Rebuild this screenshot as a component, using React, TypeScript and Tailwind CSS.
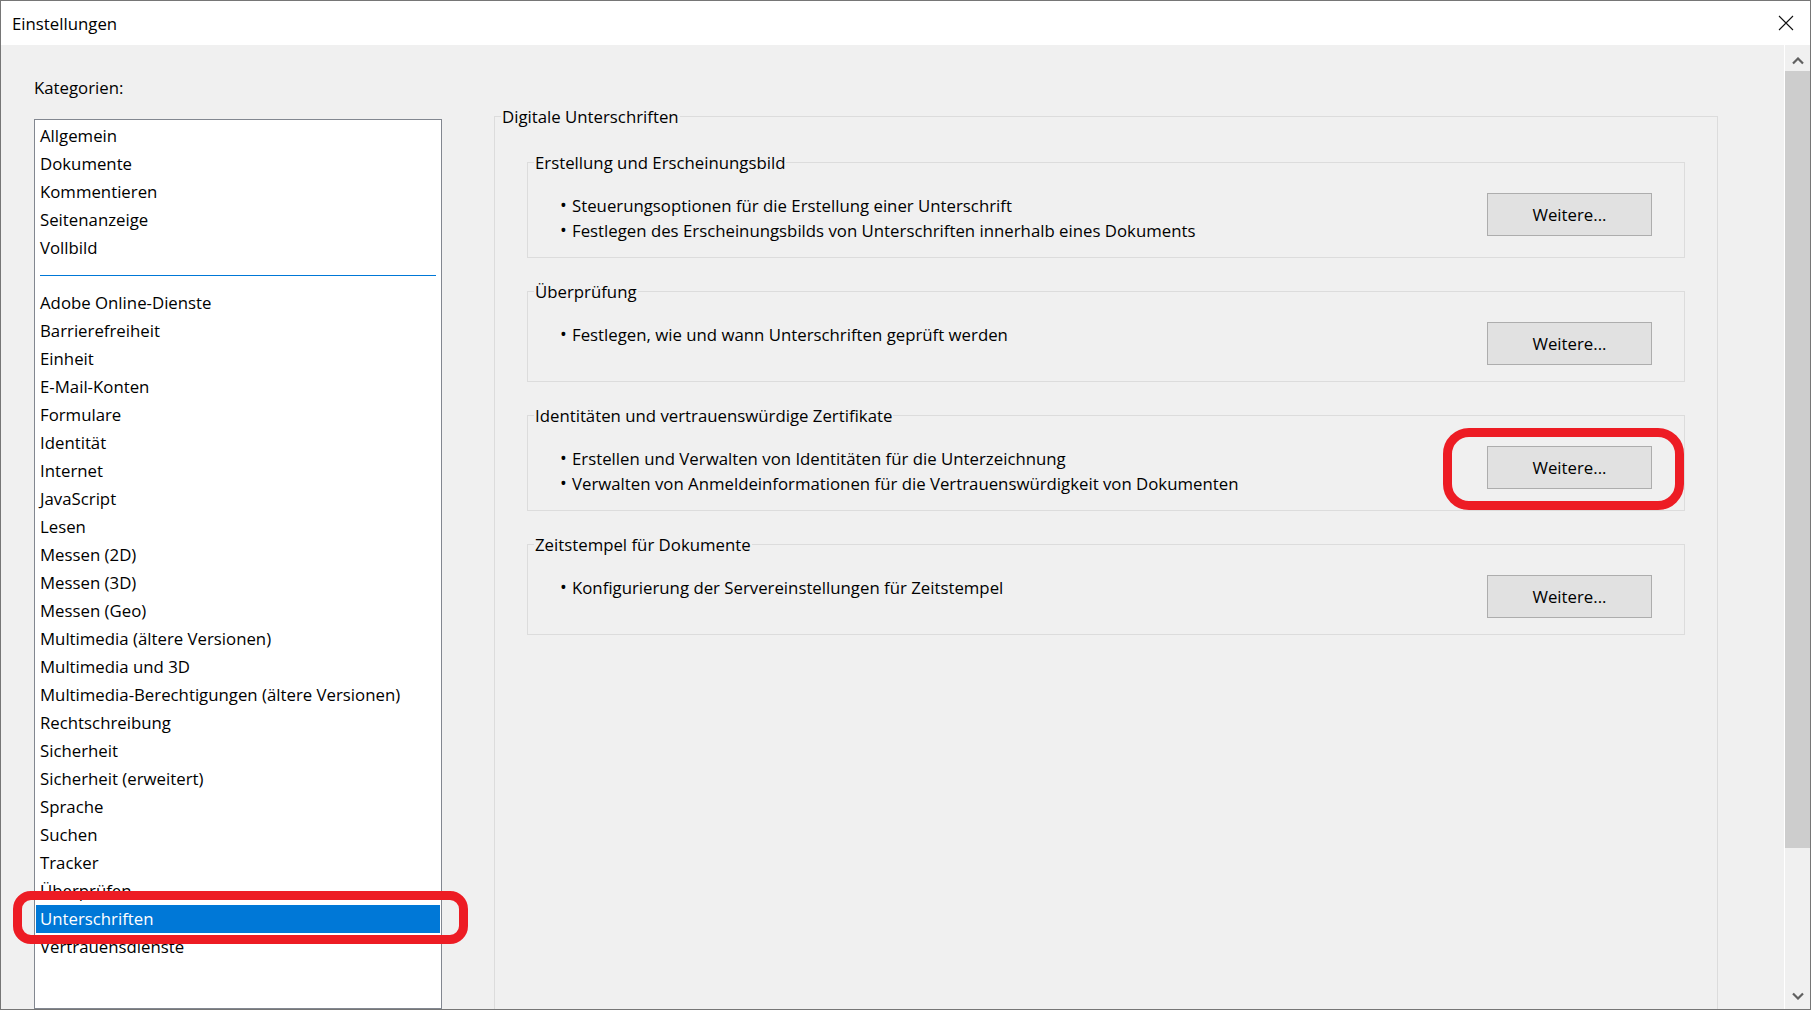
import React from 'react';

const topCategories = ['Allgemein', 'Dokumente', 'Kommentieren', 'Seitenanzeige', 'Vollbild'];

const moreCategories = [
  'Adobe Online-Dienste',
  'Barrierefreiheit',
  'Einheit',
  'E-Mail-Konten',
  'Formulare',
  'Identität',
  'Internet',
  'JavaScript',
  'Lesen',
  'Messen (2D)',
  'Messen (3D)',
  'Messen (Geo)',
  'Multimedia (ältere Versionen)',
  'Multimedia und 3D',
  'Multimedia-Berechtigungen (ältere Versionen)',
  'Rechtschreibung',
  'Sicherheit',
  'Sicherheit (erweitert)',
  'Sprache',
  'Suchen',
  'Tracker',
  'Überprüfen',
  'Unterschriften',
  'Vertrauensdienste',
];

const SELECTED = 'Unterschriften';

interface Section {
  title: string;
  bullets: string[];
  tall: boolean;
}

const sections: Section[] = [
  {
    title: 'Erstellung und Erscheinungsbild',
    bullets: [
      'Steuerungsoptionen für die Erstellung einer Unterschrift',
      'Festlegen des Erscheinungsbilds von Unterschriften innerhalb eines Dokuments',
    ],
    tall: true,
  },
  {
    title: 'Überprüfung',
    bullets: ['Festlegen, wie und wann Unterschriften geprüft werden'],
    tall: false,
  },
  {
    title: 'Identitäten und vertrauenswürdige Zertifikate',
    bullets: [
      'Erstellen und Verwalten von Identitäten für die Unterzeichnung',
      'Verwalten von Anmeldeinformationen für die Vertrauenswürdigkeit von Dokumenten',
    ],
    tall: true,
  },
  {
    title: 'Zeitstempel für Dokumente',
    bullets: ['Konfigurierung der Servereinstellungen für Zeitstempel'],
    tall: false,
  },
];

const CategoryRow: React.FC<{ label: string }> = ({ label }) => {
  const active = label === SELECTED;
  return (
    <div className={`h-[28px] pl-[4px] leading-[28px] whitespace-nowrap ${active ? 'bg-[#0078d7] text-white' : 'text-black'}`}>
      {label}
    </div>
  );
};

const GroupBox: React.FC<{ section: Section }> = ({ section }) => (
  <div className={`relative border border-[#dcdcdc] ${section.tall ? 'h-[96px]' : 'h-[91px]'}`}>
    <span className="absolute left-[6px] top-0 -translate-y-1/2 bg-[#f0f0f0] px-[1px] leading-[24px] text-black">
      {section.title}
    </span>
    <div className="flex items-start justify-between pt-[30px]">
      <ul className="pl-[32px]">
        {section.bullets.map(b => (
          <li key={b} className="flex h-[25px] items-center whitespace-nowrap text-black">
            <span className="w-[12px] text-[18px] leading-[25px]">•</span>
            <span>{b}</span>
          </li>
        ))}
      </ul>
      <button className="mr-[32px] h-[43px] w-[165px] border border-[#adadad] bg-[#e1e1e1] text-black">Weitere...</button>
    </div>
  </div>
);

const Chevron: React.FC<{ down?: boolean }> = ({ down }) => (
  <svg width="12" height="8" viewBox="0 0 12 8" className="block">
    <path d={down ? 'M1 1.5 L6 6.5 L11 1.5' : 'M1 6.5 L6 1.5 L11 6.5'} fill="none" stroke="#606060" strokeWidth="2.2" />
  </svg>
);

export default function App() {
  return (
    <div className="relative flex h-[1010px] w-[1811px] flex-col overflow-hidden border border-[#767676] bg-[#f0f0f0] font-['Open_Sans','Noto_Sans',sans-serif] text-[16.8px] text-black">
      <header className="flex h-[44px] shrink-0 items-center justify-between bg-white pl-[11px] pt-[2px]">
        <span>Einstellungen</span>
        <svg width="16" height="16" viewBox="0 0 16 16" className="mr-[16px] mb-[2px]">
          <path d="M1 1 L15 15 M15 1 L1 15" stroke="#111" strokeWidth="1.1" />
        </svg>
      </header>

      <div className="flex min-h-0 flex-1">
        <aside className="flex w-[493px] shrink-0 flex-col pl-[33px] pt-[31px]">
          <p className="leading-[24px]">Kategorien:</p>
          <div className="mt-[19px] w-[408px] flex-1 border border-[#828790] bg-white px-[1px] pt-[2px]">
            {topCategories.map(c => (
              <CategoryRow key={c} label={c} />
            ))}
            <div className="flex h-[27px] items-center px-[4px]">
              <div className="h-[1px] w-full bg-[#0078d7]" />
            </div>
            {moreCategories.map(c => (
              <CategoryRow key={c} label={c} />
            ))}
          </div>
        </aside>

        <main className="flex flex-1 pt-[71px]">
          <section className="relative w-[1224px] shrink-0 border-x border-t border-[#dcdcdc] px-[32px] pt-[45px]">
            <span className="absolute left-[6px] top-0 -translate-y-1/2 bg-[#f0f0f0] px-[1px] leading-[24px]">
              Digitale Unterschriften
            </span>
            <div className="flex flex-col gap-[33px]">
              {sections.map(s => (
                <GroupBox key={s.title} section={s} />
              ))}
            </div>
          </section>
        </main>

        <div className="flex w-[26px] shrink-0 flex-col border-l border-white bg-[#f0f0f0]">
          <div className="flex h-[26px] justify-center pt-[12px]">
            <Chevron />
          </div>
          <div className="h-[777px] bg-[#cdcdcd]" />
          <div className="flex flex-1 items-end justify-center pb-[9px]">
            <Chevron down />
          </div>
        </div>
      </div>

      <div className="pointer-events-none absolute left-[12px] top-[890px] h-[53px] w-[455px] rounded-[18px] border-[9px] border-[#ed1c24]" />
      <div className="pointer-events-none absolute left-[1442px] top-[427px] h-[82px] w-[241px] rounded-[26px] border-[9px] border-[#ed1c24]" />
    </div>
  );
}
